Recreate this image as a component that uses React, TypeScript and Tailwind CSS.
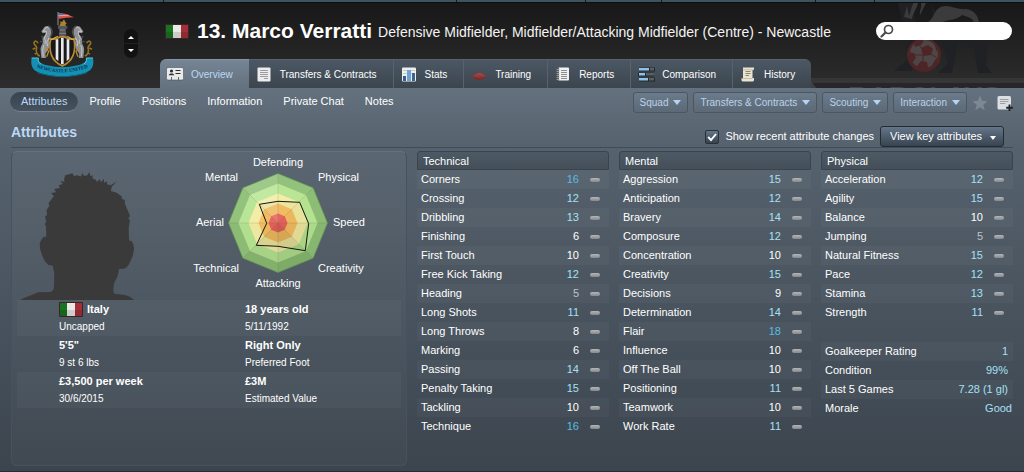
import type { ReactNode } from "react";

type Attribute = [name: string, value: number];

const technical: Attribute[] = [
  ["Corners", 16],
  ["Crossing", 12],
  ["Dribbling", 13],
  ["Finishing", 6],
  ["First Touch", 10],
  ["Free Kick Taking", 12],
  ["Heading", 5],
  ["Long Shots", 11],
  ["Long Throws", 8],
  ["Marking", 6],
  ["Passing", 14],
  ["Penalty Taking", 15],
  ["Tackling", 10],
  ["Technique", 16],
];

const mental: Attribute[] = [
  ["Aggression", 15],
  ["Anticipation", 12],
  ["Bravery", 14],
  ["Composure", 12],
  ["Concentration", 10],
  ["Creativity", 15],
  ["Decisions", 9],
  ["Determination", 14],
  ["Flair", 18],
  ["Influence", 10],
  ["Off The Ball", 10],
  ["Positioning", 11],
  ["Teamwork", 10],
  ["Work Rate", 11],
];

const physical: Attribute[] = [
  ["Acceleration", 12],
  ["Agility", 15],
  ["Balance", 10],
  ["Jumping", 5],
  ["Natural Fitness", 15],
  ["Pace", 12],
  ["Stamina", 13],
  ["Strength", 11],
];

const summary: [string, string][] = [
  ["Goalkeeper Rating", "1"],
  ["Condition", "99%"],
  ["Last 5 Games", "7.28 (1 gl)"],
  ["Morale", "Good"],
];

function valueColour(value: number) {
  if (value >= 16) return "text-[#58bce6]";
  if (value >= 11) return "text-[#a5e0f8]";
  if (value >= 6) return "text-white";
  return "text-[#bfc2c5]";
}

function Flag() {
  return (
    <svg viewBox="0 0 24 15" className="h-[15px] w-6 shrink-0" role="img" aria-label="Italy">
      <rect width="24" height="15" rx="1" fill="#3a2426" />
      <rect x="1" y="1" width="7" height="13" fill="#1a7322" />
      <rect x="8" y="1" width="8" height="13" fill="#ebe8e8" />
      <rect x="16" y="1" width="7" height="13" fill="#a52f38" />
      <rect x="1" y="8" width="22" height="6" fill="#000" opacity="0.12" />
    </svg>
  );
}

function Crest() {
  const beast = (
    <g>
      <path
        d="M90 70c-6-8-18-4-20 4l-6 8 4 6 10-2c0 6-8 10-10 16s2 10 0 16c-4 8-8 14-6 24l2 20h14l-2-12c4-8 12-14 12-24l12-10-2-6-12 2c6-8 8-16 8-26 0-6-2-12-4-16z"
        fill="#8f9196"
      />
      <path
        d="M86 72c-5-4-11-1-13 5l-4 6 9-2c4 6-2 16-5 22 3 5 4 10 2 16M72 124c-5 8-4 20-2 34M88 100l-8 16 3 10M92 116l9-5"
        fill="none"
        stroke="#c6c7cb"
        strokeWidth="3"
      />
      <path d="M84 66c8 2 14 12 12 22l-6 14M64 96l6 6M60 112l8 2" fill="none" stroke="#4a4b50" strokeWidth="4" />
      <path
        d="M60 156c-10-2-14-16-10-24 0-8-8-8-8-16 2-8 10-4 12 2M46 132l-8 4M52 146l-8 4"
        fill="none"
        stroke="#94701f"
        strokeWidth="5"
      />
      <path d="M76 130l10 12-6 16" fill="none" stroke="#b98a2c" strokeWidth="4" />
    </g>
  );
  return (
    <svg viewBox="0 0 270 240" className="h-20 w-[90px]" role="img" aria-label="Newcastle United crest">
      {beast}
      <g transform="translate(254 0) scale(-1 1)">{beast}</g>
      <path d="M114 24v40" stroke="#8d99a5" strokeWidth="3" />
      <path d="M115 26l24 4 23 10-24 1-23 4z" fill="#d9544f" />
      <path d="M115 26l14 3v4l-14 2z" fill="#3f77a8" />
      <path d="M115 35l32-1" stroke="#e9c7c4" strokeWidth="2" />
      <path d="M118 66l4-10-4-4 8 2 6-8 4 8 4 4-4 4 4 8z" fill="#a98135" />
      <path d="M114 66h28v8h-5l3 28h-24l3-28h-5z" fill="#54565c" />
      <path d="M118 78h18M118 88h20" stroke="#9a9ca1" strokeWidth="2" />
      <path
        d="M92 104c12 6 24-6 35-6s23 12 35 6c6 34 2 66-35 82-37-16-41-48-35-82z"
        fill="#17181b"
        stroke="#b98a2c"
        strokeWidth="5"
      />
      <path d="M107 106h8v66l-8-8zM123 101h8v80h-8zM140 106h8v58l-8 8z" fill="#e9e9eb" />
      <path d="M92 106c8 4 14-10 22-8M162 106c-8 4-14-10-22-8" fill="none" stroke="#dbab45" strokeWidth="4" />
      <path
        d="M35 162l20 0c-2 10 8 18 26 22 32 8 60 8 92 0 18-4 28-12 26-22h20c4 18-2 34-14 40-38 20-118 20-156 0-12-6-18-22-14-40z"
        fill="#1590b5"
      />
      <path d="M35 162l20 0c-2 10 2 15 8 18M219 162h-20c2 10-2 15-8 18" fill="none" stroke="#5cc6e2" strokeWidth="3" />
      <path d="M52 206c50 16 100 16 150 0" fill="none" stroke="#0d6480" strokeWidth="3" />
      <path id="ribbon" d="M48 190c54 20 106 20 158 0" fill="none" />
      <text fill="#0b2f42" fontSize="15" fontWeight="700" fontFamily="Liberation Serif, serif" textAnchor="middle">
        <textPath href="#ribbon" startOffset="50%">
          NEWCASTLE UNITED
        </textPath>
      </text>
    </svg>
  );
}

function Backdrop() {
  return (
    <svg
      viewBox="800 3 224 85"
      className="pointer-events-none absolute right-0 top-0 h-[85px] w-[224px]"
      aria-hidden="true"
    >
      <path
        d="M898 3h14l4 20-6 18 4 20-2 10h-18l14-12-4-30zM930 3l10 18 30 6 14-6 4 24-2 20 6 8h-14l-4-24-16-8-6 32h-14l10-10z"
        fill="#202125"
      />
      <path
        d="M904 17l3-11 2 10 4-13h5c-1 6-5 9-6 16M921 3c1 5-2 8-1 12l6-12zM926 23c10-4 6-16 20-17 8 1 14 4 20 3 8 1 13 7 13 15h-5c0-6-6-7-12-9-4 5-14 4-22 8z"
        fill="#3b3b3c"
      />
      <circle cx="924" cy="55" r="17" fill="#4e2526" />
      <circle cx="924" cy="54" r="14" fill="#4c4646" />
      <path
        d="M921 48l7-3 5 4-2 6-8 1zM908 52l6 1 2 5-4 5-4-4zM917 66l4-5 6 1 1 6-6 2zM935 60l5-3v5l-5 5-3-2zM914 43l6-4 4 2-3 4-6 2zM934 42l5 6v5l-3-3z"
        fill="#4e2526"
      />
      <path d="M914 55l8 0M931 54l6 4M923 55l0 8M921 48l-2-4" stroke="#4e2526" strokeWidth="1" />
      <path d="M809 78h215v5H809z" fill="#363637" />
      <path d="M811 83h213v5H816z" fill="#28262a" />
      <path d="M809 78l7 10h-5l-2-5z" fill="#404041" />
      <text x="848" y="106" fill="#454342" fontSize="28" fontWeight="700" fontFamily="Liberation Sans, sans-serif">
        BARCLAYS
      </text>
    </svg>
  );
}

const icons: Record<string, ReactNode> = {
  Overview: (
    <svg viewBox="0 0 18 14" className="h-3.5 w-[18px]" aria-hidden="true">
      <rect x="0.5" y="0.5" width="17" height="12.5" rx="1.5" fill="#e9eaea" stroke="#4a545d" strokeWidth="0.6" />
      <circle cx="5.5" cy="4" r="1.6" fill="#2b2f33" />
      <path d="M2.800 8.200c0-2.400 5.400-2.400 5.400 0z" fill="#2b2f33" />
      <path d="M9.500 3.500h5M9.500 6.500h5" stroke="#2b2f33" strokeWidth="1" />
      <path d="M5.500 10v3M12.500 10v3" stroke="#666" strokeWidth="1" />
    </svg>
  ),
  "Transfers & Contracts": (
    <svg viewBox="0 0 14 15" className="h-[15px] w-3.5" aria-hidden="true">
      <rect x="0.5" y="0.5" width="13" height="14" rx="1" fill="#ececec" />
      <path d="M3 3.500h8M3 5.500h8M3 7.500h8M3 9.500h8M7 11.500h4" stroke="#9a9c9f" strokeWidth="1" />
    </svg>
  ),
  Stats: (
    <svg viewBox="0 0 14 15" className="h-[15px] w-3.5" aria-hidden="true">
      <rect x="0" y="0.5" width="14" height="14" rx="1" fill="#eeeeee" />
      <path d="M1 3.500h12M1 6.500h12" stroke="#b5b8bb" strokeWidth="0.700" />
      <rect x="1" y="9" width="3" height="5" fill="#3b5f8a" />
      <rect x="5" y="3" width="4" height="11" fill="#6ea3d8" />
      <rect x="10" y="6" width="3" height="8" fill="#41648c" />
    </svg>
  ),
  Training: (
    <svg viewBox="0 0 16 10" className="mt-1 h-2.5 w-4" aria-hidden="true">
      <path d="M0.500 5.500C4 4.300 5 1.500 8.500 1.500S13 4.300 15.500 5.500C13 8 10 9 8 9S3 8 0.500 5.500z" fill="#8f3b3b" />
      <path d="M0.500 5.500c5 1.500 10 1.500 15 0C13 8 10.500 9 8 9S3 8 0.500 5.500z" fill="#74302f" />
      <path d="M5 4.500c2-2 5-2 7 0" stroke="#a85957" strokeWidth="0.900" fill="none" />
    </svg>
  ),
  Reports: (
    <svg viewBox="0 0 14 14" className="h-3.5 w-3.5" aria-hidden="true">
      <rect x="2" y="0.500" width="11" height="13" rx="1" fill="#f1f1f1" />
      <rect x="1" y="0.500" width="2" height="13" fill="#5a5d60" />
      <path d="M0.500 2.500h3M0.500 4.500h3M0.500 6.500h3M0.500 8.500h3M0.500 10.500h3M0.500 12.500h3" stroke="#a8aaac" strokeWidth="0.800" />
      <path d="M5 3.500h6M5 5.500h6M5 7.500h6M5 9.500h6M5 11.500h6" stroke="#8b8e91" strokeWidth="1" />
    </svg>
  ),
  Comparison: (
    <svg viewBox="0 0 17 15" className="h-[15px] w-[17px]" aria-hidden="true">
      <path d="M1 0.500h16v4H1zM0 5.500h16v4H0zM1 10.500h16v4H1z" fill="#23282c" />
      <path d="M1 1h10v2.500H1zM1 6h6v2.500H1zM1 11h9v2.500H1z" fill="#8cc3e6" />
      <path d="M12 1h4v2.500h-4zM8 6h8v2.500H8zM11 11h5v2.500h-5z" fill="#5c5f61" />
    </svg>
  ),
  History: (
    <svg viewBox="0 0 14 15" className="h-[15px] w-3.5" aria-hidden="true">
      <path d="M2 0.500h11v2l-1.500 .8V11H13v2.500L12 14.500H1.500L.5 13.500V11.500H2z" fill="#e9e4d2" />
      <path d="M4.500 4.500h5M4.500 6.500h5M4.500 8.500h3.500" stroke="#8c8674" strokeWidth="1" />
      <path d="M.5 11.500h11M2 2.800h10" stroke="#b8b097" strokeWidth="0.700" />
    </svg>
  ),
};

const tabs = ["Overview", "Transfers & Contracts", "Stats", "Training", "Reports", "Comparison", "History"];
const views = ["Attributes", "Profile", "Positions", "Information", "Private Chat", "Notes"];
const menus = ["Squad", "Transfers & Contracts", "Scouting", "Interaction"];

function Header() {
  return (
    <header className="relative flex h-[85px] items-end overflow-hidden bg-linear-to-b from-[#181818] to-[#2d2d2d]">
      <Backdrop />
      <div className="flex w-40 shrink-0 items-center self-stretch pb-1 pl-5">
        <Crest />
        <div className="ml-3.5 flex flex-col gap-px overflow-hidden rounded-full">
          <button aria-label="Previous player" className="flex h-3.5 w-3.5 items-center justify-center bg-[#121212] pt-0.5">
            <svg viewBox="0 0 6 3" className="h-[3px] w-1.5" aria-hidden="true">
              <path d="M0 3h6L3 0z" fill="#fff" />
            </svg>
          </button>
          <button aria-label="Next player" className="flex h-3.5 w-3.5 items-center justify-center bg-[#121212] pb-0.5">
            <svg viewBox="0 0 6 3" className="h-[3px] w-1.5" aria-hidden="true">
              <path d="M0 0h6L3 3z" fill="#fff" />
            </svg>
          </button>
        </div>
      </div>
      <div className="relative flex min-w-0 flex-1 flex-col">
        <div className="flex h-14 items-center whitespace-nowrap pl-[5px] pr-3">
          <Flag />
          <h1 className="ml-2 text-[21px] font-bold leading-6 text-white">13. Marco Verratti</h1>
          <p className="ml-1.5 pt-0.5 text-[14px] leading-5 text-[#f4f4f4]">
            Defensive Midfielder, Midfielder/Attacking Midfielder (Centre) - Newcastle
          </p>
          <label className="relative ml-auto">
            <span className="sr-only">Search</span>
            <input type="search" className="block h-[18px] w-[136px] appearance-none rounded-full bg-white pl-6 pr-2 text-[11px] text-black" />
            <svg viewBox="0 0 14 14" className="absolute left-1 top-0.5 h-3.5 w-3.5" aria-hidden="true">
              <circle cx="8.500" cy="5.500" r="4" fill="none" stroke="#4a4a4a" strokeWidth="1.700" />
              <path d="M5.500 8.500L1.500 12.500" stroke="#4a4a4a" strokeWidth="2.200" strokeLinecap="round" />
            </svg>
          </label>
        </div>
        <nav aria-label="Player sections" className="flex h-[29px] self-start overflow-hidden rounded-t-md">
          {tabs.map((tab, i) => (
            <a
              key={tab}
              href="#"
              aria-current={i === 0 ? "page" : undefined}
              className={
                i === 0
                  ? "flex items-center whitespace-nowrap border-t border-[#8494a3] bg-linear-to-b from-[#758595] to-[#64717e] pl-1.5 pr-4 text-[10px] text-[#bcd8f5]"
                  : "flex items-center whitespace-nowrap border-r border-t border-[#56626d] bg-linear-to-b from-[#4b5864] to-[#3c454e] pl-1.5 pr-4 text-[10px] text-white last:border-r-0"
              }
            >
              <span className="mr-[7px] flex w-[18px] justify-center">{icons[tab]}</span>
              {tab}
            </a>
          ))}
        </nav>
      </div>
    </header>
  );
}

function SubNav() {
  return (
    <div className="flex h-7 items-start justify-between px-2.5 pt-1">
      <nav aria-label="Player views" className="flex whitespace-nowrap text-[11px]">
        {views.map((view, i) => (
          <a
            key={view}
            href="#"
            aria-current={i === 0 ? "page" : undefined}
            className={
              i === 0
                ? "mr-px flex h-5 items-center rounded-full border-b border-[#74828f] bg-linear-to-b from-[#37434f] to-[#46535f] px-[11px] text-[#bcd8f5]"
                : "mr-px flex h-5 items-center rounded-full px-2.5 pb-px text-white"
            }
          >
            {view}
          </a>
        ))}
      </nav>
      <div className="flex items-center gap-[5px] whitespace-nowrap pr-px">
        {menus.map((menu) => (
          <button
            key={menu}
            aria-haspopup="menu"
            className="flex h-[21px] items-center gap-[5px] rounded-[3px] border border-[#4a5763] bg-linear-to-b from-[#6b7b8b] to-[#5c6976] px-1.5 text-[10px] text-[#bcd2ea]"
          >
            {menu}
            <svg viewBox="0 0 8 5" className="h-[5px] w-2 shrink-0" aria-hidden="true">
              <path d="M0 0h8L4 5z" fill="#b4d4f4" />
            </svg>
          </button>
        ))}
        <button aria-label="Add to shortlist" className="mr-1 flex h-4 w-4 items-center justify-center">
          <svg viewBox="0 0 16 16" className="h-4 w-4" aria-hidden="true">
            <path d="M8 0.500l2.100 5.300 5.400.4-4.200 3.600 1.400 5.500L8 12.300l-4.700 3 1.400-5.500L.5 6.200l5.400-.4z" fill="#7d8894" />
          </svg>
        </button>
        <button aria-label="Add note" className="flex h-4 w-4 items-center justify-center">
          <svg viewBox="0 0 16 16" className="h-4 w-4" aria-hidden="true">
            <rect x="0.500" y="1" width="13.500" height="13.500" rx="1.500" fill="#dcdfe1" />
            <path d="M3 4.500h8.500M3 6.500h8.500M3 8.500h5.500" stroke="#9aa0a5" strokeWidth="1" />
            <path d="M12.500 9.500v6.500M9.200 12.700h6.600" stroke="#1f2326" strokeWidth="1.900" />
          </svg>
        </button>
      </div>
    </div>
  );
}

function Toolbar() {
  return (
    <div className="mx-[11px] flex h-8 items-center justify-between border-b border-[#414c57]">
      <h2 className="text-[14px] font-bold leading-5 text-[#bcd8f5]">Attributes</h2>
      <div className="flex items-center gap-1.5 whitespace-nowrap pr-[9px] pt-2.5 text-[11px] text-white">
        <label className="flex items-center gap-1.5">
          <span className="relative flex">
            <input
              type="checkbox"
              defaultChecked
              className="peer h-3.5 w-3.5 appearance-none rounded-xs border border-[#27313b] bg-linear-to-b from-[#66768a] to-[#35424f]"
            />
            <svg viewBox="0 0 14 14" className="pointer-events-none absolute inset-0 hidden h-3.5 w-3.5 peer-checked:block" aria-hidden="true">
              <path d="M3.200 7l2.800 3 5-6" fill="none" stroke="#fff" strokeWidth="1.900" />
            </svg>
          </span>
          Show recent attribute changes
        </label>
        <div className="relative">
          <select
            aria-label="Attribute view"
            className="block h-[21px] appearance-none rounded-[3px] border border-[#232c35] bg-linear-to-b from-[#65768a] to-[#38444f] pl-[9px] pr-5 text-[11px] text-white"
          >
            <option>View key attributes</option>
          </select>
          <span className="pointer-events-none absolute inset-y-0 right-2 flex items-center pt-0.5">
            <svg viewBox="0 0 6 4" className="h-1 w-1.5" aria-hidden="true">
              <path d="M0 0h6L3 4z" fill="#fff" />
            </svg>
          </span>
        </div>
      </div>
    </div>
  );
}

function Silhouette() {
  return (
    <svg viewBox="12 152 128 148" className="h-[148px] w-32 shrink-0" role="img" aria-label="No photo available">
      <path
        d="M20 300C26 297 32 295 38.300 292.300L50 292Q53.500 291.500 54 286.700L54.300 273 52.700 265.700 48.300 265Q44 261 42.700 256.700 39.700 250 39.700 245 40 240 44 236.700L46.300 237 46 226.700 44.800 224 46.300 222 45 216.700 47 215 46.700 210 49.300 206 48.700 203 51 200 54 196 51 193 56 192.300 54.300 189 60 188 58.500 185.500 62.700 184 60.300 180.700 64.500 182 64 179 65.300 175.300 69 174.300 72.300 173.300 74 176 77.300 175.300 81 176.500 82.300 173 84 176 87.300 175.300 89.300 172 90.300 176 92.700 175.300 92.300 178.300 96 180 96.700 182 99.700 179.300 101 182.300 104 178.700 104 182.700 107.300 181.300 106.700 184.300 110.700 185.300 117 181.300 111.700 186.700 111 191 116.700 192.700 122 196.700 121.700 198.700 124.700 200 125 204 126.700 208 130 216 128.300 218.300 130 220.500 128.700 227.300 129 240.500 131.700 241.300Q134 244 134 248.300 133.500 255 131.700 258.300 129.500 264.500 126.700 267.300L124 268.700 119 269Q118.500 274 117.300 276.700L114 283.300 113.300 290Q113.300 294 116 294L125 295Q131 296.500 134 300z"
        fill="#3a3a3a"
      />
    </svg>
  );
}

const CENTRE = { x: 278, y: 223 };
const compass: [number, number][] = [
  [0, -1],
  [0.71, -0.71],
  [1, 0],
  [0.71, 0.71],
  [0, 1],
  [-0.71, 0.71],
  [-1, 0],
  [-0.71, -0.71],
];
const rings: [number, string][] = [
  [49.5, "#8fc077"],
  [39.5, "#b7e592"],
  [29.5, "#f3eda4"],
  [19.5, "#f8bf62"],
  [9.5, "#f0605f"],
];
const shades = ["#ffffff08", "#00000003", "#0000000d", "#0000001c", "#00000014", "#00000006", "#ffffff0a", "#ffffff26"];
const radarLabels: [string, number, number, "start" | "middle" | "end"][] = [
  ["Defending", 278, 166, "middle"],
  ["Physical", 318, 181, "start"],
  ["Speed", 333, 226, "start"],
  ["Creativity", 318, 272, "start"],
  ["Attacking", 278, 287, "middle"],
  ["Technical", 239, 272, "end"],
  ["Aerial", 224, 226, "end"],
  ["Mental", 238, 181, "end"],
];

function spoke(i: number, radius: number) {
  const [dx, dy] = compass[i % 8];
  return `${CENTRE.x + dx * radius},${CENTRE.y + dy * radius}`;
}

function Radar() {
  const profile = "278,201.300 299.700,202.300 308.700,223.700 305.300,250.700 278,246.300 256.300,245.300 266.700,223.300 259.300,204.300";
  return (
    <svg viewBox="180 152 200 148" className="ml-10 h-[148px] w-[200px] shrink-0" role="img" aria-label="Attribute profile">
      {rings.map(([radius, fill]) => (
        <polygon key={radius} points={compass.map((_, i) => spoke(i, radius)).join(" ")} fill={fill} />
      ))}
      {shades.map((fill, i) => (
        <polygon key={fill} points={`${CENTRE.x},${CENTRE.y} ${spoke(i, 49.5)} ${spoke(i + 1, 49.5)}`} fill={fill} />
      ))}
      {compass.map((_, i) => (
        <polyline key={i} points={`${CENTRE.x},${CENTRE.y} ${spoke(i, 49.5)}`} stroke="#5a6a3c" strokeOpacity="0.25" strokeWidth="0.700" />
      ))}
      <polygon points={compass.map((_, i) => spoke(i, 49.5)).join(" ")} fill="none" stroke="#5f9350" strokeWidth="0.700" />
      <polygon points={profile} fill="#80703010" stroke="#16180f" strokeWidth="1" />
      {radarLabels.map(([label, x, y, anchor]) => (
        <text key={label} x={x} y={y} textAnchor={anchor} fill="#fff" fontSize="11">
          {label}
        </text>
      ))}
    </svg>
  );
}

function Fact({ main, detail, flag }: { main: string; detail: string; flag?: boolean }) {
  return (
    <div>
      <p className="flex h-[18px] items-center gap-1 text-[11px] font-bold">
        {flag && <Flag />}
        {main}
      </p>
      <p className="h-[18px] text-[10px] leading-[18px]">{detail}</p>
    </div>
  );
}

function Biography() {
  return (
    <section
      aria-label="Biography"
      className="rounded-md border border-[#46525e] border-t-[#66737f] bg-linear-to-b from-white/3 to-white/2 text-white"
    >
      <div className="flex">
        <Silhouette />
        <Radar />
      </div>
      <div className="mx-[5px]">
        {[
          [
            { main: "Italy", detail: "Uncapped", flag: true },
            { main: "18 years old", detail: "5/11/1992" },
          ],
          [
            { main: "5'5\"", detail: "9 st 6 lbs" },
            { main: "Right Only", detail: "Preferred Foot" },
          ],
          [
            { main: "£3,500 per week", detail: "30/6/2015" },
            { main: "£3M", detail: "Estimated Value" },
          ],
        ].map(([left, right]) => (
          <div key={left.main} className="grid grid-cols-[186fr_156fr] whitespace-nowrap pl-[42px] odd:bg-white/3">
            <Fact {...left} />
            <Fact {...right} />
          </div>
        ))}
      </div>
    </section>
  );
}

function AttributeTable({ title, rows }: { title: string; rows: Attribute[] }) {
  return (
    <table className="w-full border-separate border-spacing-0 self-start whitespace-nowrap text-[11px] text-white">
      <thead>
        <tr>
          <th
            colSpan={3}
            scope="colgroup"
            className="h-[19px] rounded-t-[3px] border border-[#3a444e] bg-linear-to-b from-[#4d5964] to-[#444f59] p-0 pl-[5px] text-left font-normal leading-4"
          >
            {title}
          </th>
        </tr>
      </thead>
      <tbody>
        {rows.map(([name, value]) => (
          <tr key={name} className="odd:bg-white/3">
            <th scope="row" className="h-[19px] p-0 pb-0.5 pl-1 text-left font-normal leading-4">
              {name}
            </th>
            <td className={`p-0 pb-0.5 text-right leading-4 ${valueColour(value)}`}>{value}</td>
            <td className="w-[30px] p-0 pl-[11px]">
              <span role="img" aria-label="No change" className="block h-1 w-2.5 rounded-full bg-linear-to-b from-[#b4b6b9] to-[#85898d]" />
            </td>
          </tr>
        ))}
      </tbody>
    </table>
  );
}

export default function App() {
  return (
    <div className="flex min-h-screen flex-col border-b border-[#252c33] bg-[#3c464f] font-['Liberation_Sans',Arial,sans-serif]">
      <div className="grid h-[3px] shrink-0 grid-cols-[164fr_293fr_129fr_76fr_154fr_59fr_149fr] border-b border-[#0c0f11] bg-[#41525f]">
        {["a", "b", "c", "d", "e", "f"].map((slot) => (
          <span key={slot} className="border-r border-[#14191d]" />
        ))}
      </div>
      <Header />
      <div className="flex flex-1 flex-col bg-linear-to-b from-[#64717e] via-[#56626e] via-15% to-[#3c454e]">
        <SubNav />
        <Toolbar />
        <main className="mx-[11px] mb-[5px] mt-[3px] grid flex-1 grid-cols-[396fr_192fr_192fr_192fr] gap-x-2.5">
          <Biography />
          <AttributeTable title="Technical" rows={technical} />
          <AttributeTable title="Mental" rows={mental} />
          <div>
            <AttributeTable title="Physical" rows={physical} />
            <table className="mt-5 w-full whitespace-nowrap text-[11px] text-white">
              <tbody>
                {summary.map(([name, value]) => (
                  <tr key={name} className="odd:bg-white/3">
                    <th scope="row" className="h-[19px] p-0 pb-0.5 pl-1 text-left font-normal leading-4">
                      {name}
                    </th>
                    <td className="p-0 pb-0.5 pr-[5px] text-right leading-4 text-[#a5e0f8] [tr:last-child>&]:pr-px">{value}</td>
                  </tr>
                ))}
              </tbody>
            </table>
          </div>
        </main>
      </div>
    </div>
  );
}
